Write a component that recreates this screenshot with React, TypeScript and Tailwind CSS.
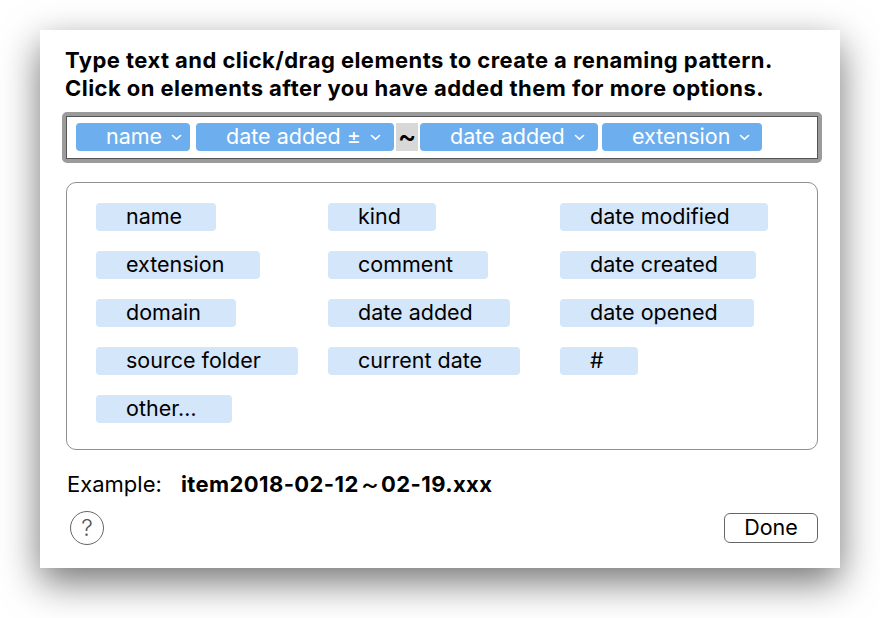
import React from 'react';

const pattern = [
  { label: 'name', w: 'w-[114px]', ml: 'ml-0' },
  { label: 'date added ±', w: 'w-[198px]', ml: 'ml-[6px]' },
  { label: 'date added', w: 'w-[178px]', ml: 'ml-[2px]' },
  { label: 'extension', w: 'w-[160px]', ml: 'ml-[4px]' },
];

const palette = [
  { label: 'name', w: 'w-[120px]' },
  { label: 'kind', w: 'w-[108px]' },
  { label: 'date modified', w: 'w-[208px]' },
  { label: 'extension', w: 'w-[164px]' },
  { label: 'comment', w: 'w-[160px]' },
  { label: 'date created', w: 'w-[196px]' },
  { label: 'domain', w: 'w-[140px]' },
  { label: 'date added', w: 'w-[182px]' },
  { label: 'date opened', w: 'w-[194px]' },
  { label: 'source folder', w: 'w-[202px]' },
  { label: 'current date', w: 'w-[192px]' },
  { label: '#', w: 'w-[78px]' },
  { label: 'other…', w: 'w-[136px]' },
];

function Chevron() {
  return (
    <svg width="11" height="7" viewBox="0 0 11 7" className="ml-[9px] shrink-0">
      <polyline points="1.5,1.5 5.5,5.2 9.5,1.5" fill="none" stroke="white" strokeWidth="1.6" strokeLinecap="round" strokeLinejoin="round" />
    </svg>
  );
}

function PatternToken({ label, w, ml }: { label: string; w: string; ml: string }) {
  return (
    <div className={`${w} ${ml} h-[28px] rounded-[4px] bg-[#6daeee] text-white flex items-center pl-[30px] text-[21.5px] leading-none`}>
      <span>{label}</span>
      <Chevron />
    </div>
  );
}

export default function App() {
  return (
    <div className="w-[880px] h-[618px] bg-white pt-[30px] pl-[40px] overflow-hidden" style={{ fontFamily: 'Inter, "Liberation Sans", Arial, sans-serif' }}>
      <div className="w-[800px] h-[538px] bg-white shadow-[0_14px_36px_rgba(0,0,0,0.55)] flex flex-col">
        {/* header */}
        <div className="pt-[16px] pl-[25px] text-[22px] leading-[28px] font-bold tracking-[0.45px] text-black">
          <p>Type text and click/drag elements to create a renaming pattern.</p>
          <p>Click on elements after you have added them for more options.</p>
        </div>

        {/* pattern field */}
        <div className="mt-[10px] ml-[22px] w-[760px] h-[51px] rounded-[5px] border-[4px] border-[#9b9b9b]">
          <div className="h-full border border-[#555] bg-white flex items-start pt-[6px] pl-[9px]">
            <PatternToken {...pattern[0]} />
            <PatternToken {...pattern[1]} />
            <div className="ml-[2px] w-[22px] h-[28px] bg-[#d8d8d8] flex items-center justify-center text-[28px] leading-none font-medium text-black pb-[2px]">~</div>
            <PatternToken {...pattern[2]} />
            <PatternToken {...pattern[3]} />
          </div>
        </div>

        {/* element palette */}
        <div className="mt-[19px] ml-[26px] w-[752px] h-[268px] rounded-[10px] border-[1.5px] border-[#8f8f8f] pt-[20px] pl-[29px] grid grid-cols-[232px_232px_1fr] gap-y-[20px] content-start">
          {palette.map((p) => (
            <div key={p.label} className={`${p.w} h-[28px] rounded-[4px] bg-[#d4e6f9] flex items-center pl-[30px] text-[21.5px] leading-none text-black`}>
              {p.label}
            </div>
          ))}
        </div>

        {/* example */}
        <div className="mt-[21px] ml-[27px] flex items-center text-[22px] leading-[26px] text-black">
          <span className="w-[114px]">Example:</span>
          <span className="font-bold tracking-[0.4px]">item2018-02-12～02-19.xxx</span>
        </div>

        {/* buttons */}
        <div className="mt-[14px] pl-[30px] pr-[22px] flex items-center justify-between">
          <div className="w-[34px] h-[34px] rounded-full border-[1.5px] border-[#666] flex items-center justify-center text-[23px] leading-none font-light text-[#555]">?</div>
          <div className="w-[94px] h-[30px] rounded-[6px] border-[1.5px] border-[#666] flex items-center justify-center text-[21.5px] leading-none text-black">Done</div>
        </div>
      </div>
    </div>
  );
}
